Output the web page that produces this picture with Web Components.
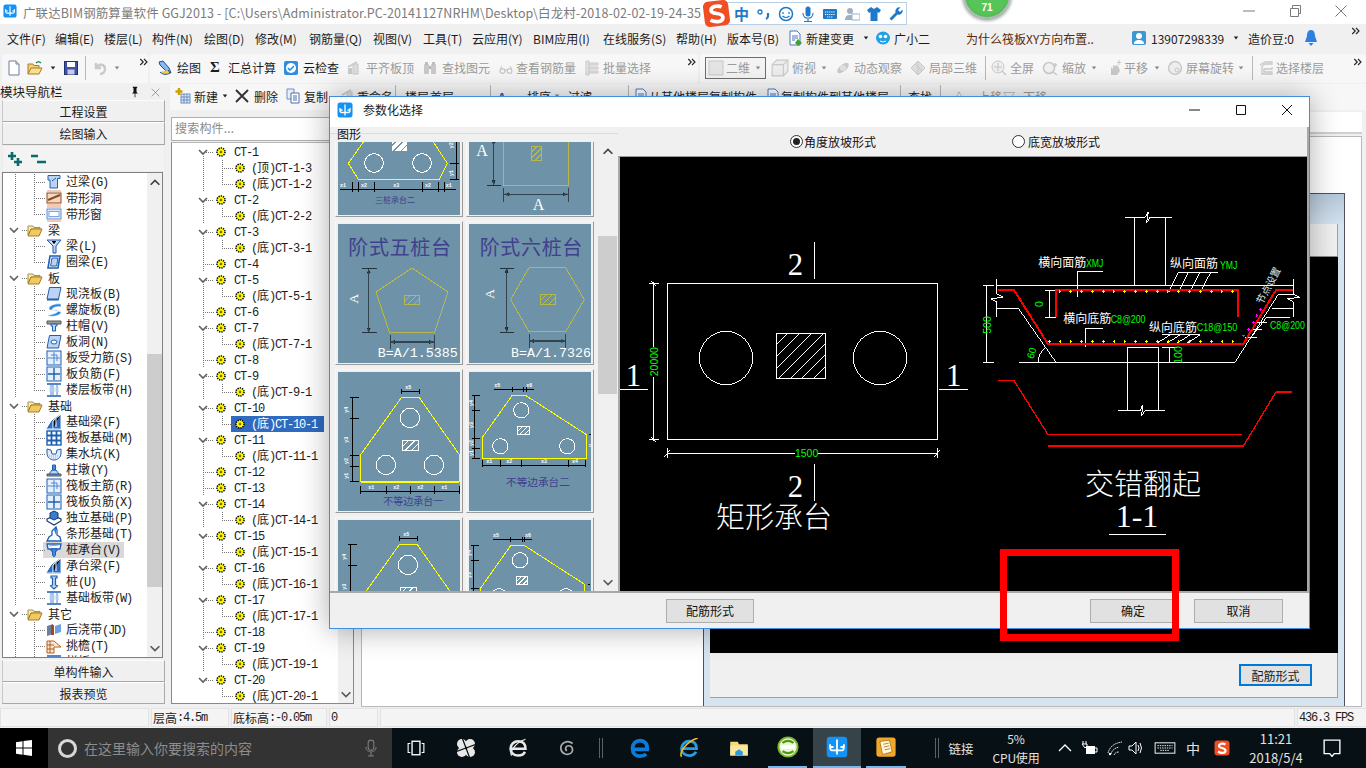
<!DOCTYPE html>
<html lang="zh"><head><meta charset="utf-8"><title>GGJ2013</title>
<style>html,body{margin:0;padding:0;overflow:hidden;background:#f0f0f0}</style></head>
<body>
<gg-app>
  <gg-title></gg-title>
  <gg-menu></gg-menu>
  <gg-tools></gg-tools>
  <gg-work></gg-work>
  <gg-status></gg-status>
  <gg-taskbar></gg-taskbar>
  <gg-ime slot="over"></gg-ime>
  <gg-badge slot="over"></gg-badge>
  <gg-dialog slot="over"></gg-dialog>
  <gg-mark slot="over"></gg-mark>
</gg-app>
<script>
const $d=(name,css,render)=>customElements.define(name,class extends HTMLElement{connectedCallback(){if(this.shadowRoot)return;const r=this.attachShadow({mode:'open'});r.innerHTML=`<style>${css}</style>`+render(this);}});
const sim=s=>s.replace(/[\x20-\x7e]+/g,m=>`<span class="m">${m}</span>`);
const SIM='.m{font-family:"Liberation Mono",monospace;letter-spacing:-1.2px}';
const FONT='"Noto Sans CJK SC","Noto Sans",sans-serif';
const B='#1c5fb5',L='#bcd4f2',G='#9a9a9a',P='#c9c9c9';
const I={
gear:`<circle cx="8" cy="8" r="4.6" fill="#ff0" stroke="#000" stroke-width="1.8" stroke-dasharray="1.5 1.1"/><circle cx="8" cy="8" r="1.6" fill="#b08a00"/><circle cx="8" cy="8" r=".7" fill="#000"/>`,
folder:`<path d="M1 4h5l1 1.5h6V7H4L1 13z" fill="#fbeec0" stroke="#b08b3a"/><path d="M4 7h11l-3 7H1z" fill="#f3c95e" stroke="#a67c2a"/>`,
guoliang:`<path d="M2 1.5h12v3h-2.5V14H4V6H2z" fill="${L}" stroke="${B}"/><path d="M6 7l4-3" stroke="${B}"/>`,
dongH:`<rect x="1" y="3" width="14" height="10" fill="#f3d9c4" stroke="#8b4a1d"/><path d="M2 10L14 5" stroke="#8b4a1d" stroke-width="2"/><path d="M1 1h14M1 15h14" stroke="#f4c8b4" stroke-width="2"/>`,
dongW:`<rect x="1" y="3" width="14" height="10" fill="#dde9fb" stroke="#5f8fd6"/><rect x="3" y="5.5" width="10" height="5" fill="#fff" stroke="#7fa6e0"/><path d="M1 1h14M1 15h14" stroke="#f4c8b4" stroke-width="2"/>`,
liang:`<path d="M1 2h14l-5 6v7H7V8z" fill="${L}" stroke="${B}"/><path d="M5 3l3 4 3-4" stroke="#fff"/>`,
quan:`<path d="M4 2h10l-2 12H2z" fill="#fff" stroke="${B}" stroke-width="1.6"/><path d="M6 4h6l-1.4 8H4.6z" fill="${L}" stroke="${B}"/>`,
ban:`<path d="M3.5 1.5H15L12.5 13H1z" fill="${L}" stroke="${B}"/><path d="M1 13v1.5h11.5l.5-1.5" fill="${B}"/>`,
luo:`<path d="M15 2C9 1 2 4 3 7s9 0 9 2-7 4-11 4c3 2 11 2 14-2 1-3-9-1-9-3s4-4 9-3z" fill="#2f86e0" stroke="#fff" stroke-width=".6"/>`,
zhumao:`<path d="M1 3h14v3H1z" fill="#9b9b9b" stroke="#555"/><path d="M5 6h6v2H9.5v5h-3V8H5z" fill="${L}" stroke="${B}"/>`,
bandong:`<path d="M3.5 1.5H15L12.5 14H1z" fill="${L}" stroke="${B}"/><ellipse cx="8" cy="8" rx="3" ry="2" fill="#fff" stroke="${B}"/>`,
shouli:`<rect x="1" y="1" width="14" height="14" fill="#e6f0fc" stroke="${B}"/><path d="M8 2v12M2 8h12M5 5h6v6" stroke="#4a87d8" fill="none"/>`,
fujin:`<rect x="1" y="1" width="14" height="14" fill="#e6f0fc" stroke="${B}"/><path d="M8 2v12M2 8h12" stroke="${B}" stroke-width="1.4"/>`,
bandai:`<path d="M1 2h14M1 14h14" stroke="${B}" stroke-width="1.6"/><path d="M5 3v10M11 3v10M7 3v10" stroke="#4a87d8"/><rect x="3" y="5" width="10" height="5" fill="#bcd4f2" opacity=".5"/>`,
jiliang:`<path d="M1 15L6 7l8-6v14z" fill="#2a70c8" stroke="${B}"/><path d="M1 15h13M7 15V7l7-6" stroke="#fff"/><path d="M10 5v8" stroke="#fff"/>`,
fab:`<rect x="1" y="1" width="14" height="14" fill="#fff" stroke="${B}" stroke-width="1.4"/><path d="M5.5 1v14M10.5 1v14M1 5.5h14M1 10.5h14" stroke="${B}" stroke-width="1.8"/>`,
jikeng:`<path d="M1 3l4 1 1 4h4l1-4 4-1v4c0 5-4 7-7 7S1 12 1 7z" fill="#dfeafa" stroke="${B}"/><path d="M3 10h10M5 12h6" stroke="#8bb0e6" stroke-dasharray="1 1"/>`,
zhudun:`<path d="M1 12h14v2H1z" fill="#9b9b9b" stroke="#555"/><path d="M3 12l3-4h4l3 4z" fill="${L}" stroke="${B}"/><path d="M6.5 8V3h3v5z" fill="#4a87d8" stroke="${B}"/>`,
duli:`<path d="M1 9l7-3 7 3v2l-7 4-7-4z" fill="#fff" stroke="#123a75" stroke-width="1.2"/><path d="M4 8V3l4-2 4 2v5l-4 2z" fill="#3a7dd0" stroke="#123a75"/>`,
tiao:`<path d="M1 15l2-4 3-2V5l4-4 1 3v5l3 2 1 4z" fill="#fff" stroke="${B}" stroke-width="1.3"/><path d="M8 4l2-2v7" fill="#3a7dd0"/>`,
chengtai:`<path d="M1 2h14l-1 5H2z" fill="#fff" stroke="${B}" stroke-width="1.3"/><path d="M5 7h6v2H9.5v4L8 15l-1.5-2V9H5z" fill="#4a87d8" stroke="${B}"/><path d="M3 4l10-1" stroke="#7fa6e0"/>`,
zhuang:`<path d="M5 2h6v2H9.5v7l2 1-3.5 3-3.5-3 2-1V4H5z" fill="${L}" stroke="${B}" stroke-width="1.2"/>`,
hou:`<path d="M1 4l6-2v10l-6 2z" fill="#6b7f9e"/><path d="M5 3h3v10H5z" fill="#a9461a"/><path d="M9 4l6-2v8l-6 2z" fill="#6ba2e6"/>`,
tiaoyan:`<path d="M1 3h7l7 6H8v6H1z" fill="#fbe6d0" stroke="#b45f1f"/><path d="M1 7h7M1 11h7M4 3v12" stroke="#b45f1f"/>`,
newdoc:`<path d="M3 1h7l3 3v11H3z" fill="#fff" stroke="#6f7f9a"/><path d="M10 1v3h3" fill="#dfe7f5" stroke="#6f7f9a"/>`,
open:`<path d="M1 14V4h5l1 1.5h5V8" fill="#f5d06e" stroke="#a67c2a"/><path d="M1 14l3-6h11l-3 6z" fill="#f9df90" stroke="#a67c2a"/><path d="M9 3c2-2 4-1 5 0" stroke="#2e8b57" fill="none" stroke-width="1.4"/>`,
save:`<rect x="1.5" y="1.5" width="13" height="13" fill="#3e52a8" stroke="#23316f"/><rect x="4" y="2" width="8" height="5" fill="#fff"/><rect x="4.5" y="9.5" width="7" height="5" fill="#c4cbe5"/>`,
undo:`<path d="M4 3v5h5M4 8c3-5 9-4 9 1 0 3-2 5-5 5" fill="none" stroke="${P}" stroke-width="2.4"/>`,
huitu:`<path d="M2 2l4-1 6 7 2 5-5-2-6-6z" fill="#89b8ee" stroke="#1f4f99"/><path d="M3 12c3 3 7 3 10 1l-2-3" fill="#f2c94c" stroke="#1f4f99"/>`,
cloud:`<rect x="1" y="1" width="14" height="14" rx="2" fill="#2e8de0"/><circle cx="8" cy="8" r="5" fill="#fff"/><path d="M5 8l2 2 4-4" fill="none" stroke="#2e8de0" stroke-width="1.6"/>`,
gb:`<rect x="2" y="8" width="4" height="6" fill="${P}"/><rect x="7" y="4" width="5" height="10" fill="#dcdcdc" stroke="${P}"/><path d="M2 7l9-5" stroke="${P}" stroke-width="1.6"/>`,
binoc:`<rect x="2" y="4" width="5" height="10" rx="1" fill="${P}"/><rect x="9" y="4" width="5" height="10" rx="1" fill="${P}"/><path d="M3 2h3v3H3zM10 2h3v3h-3z" fill="#bdbdbd"/><rect x="7" y="6" width="2" height="3" fill="#bbb"/>`,
glass:`<circle cx="4.5" cy="11" r="2.4" fill="none" stroke="${P}" stroke-width="1.3"/><circle cx="11.5" cy="11" r="2.4" fill="none" stroke="${P}" stroke-width="1.3"/><path d="M7 10h2M2 9l2-3M14 9l-2-3" stroke="${P}"/>`,
batch:`<path d="M2 1h3v14H2zM5 3h9v2H5zM5 7h9v2H5zM5 11h9v2H5z" fill="#e4e4e4" stroke="${P}"/>`,
cube:`<path d="M1 5l4-4h10v10l-4 4H1z" fill="#ededed" stroke="${P}"/><path d="M1 5h10v10M11 5l4-4" fill="none" stroke="${P}"/>`,
orbit:`<ellipse cx="8" cy="8" rx="7" ry="3.4" transform="rotate(-40 8 8)" fill="${P}"/><ellipse cx="8" cy="8" rx="3" ry="3" fill="#e0e0e0"/>`,
local:`<path d="M8 1l7 7-7 7-7-7z" fill="#dedede" stroke="${P}"/><path d="M5 4l7 7M8 1v14" stroke="${P}"/>`,
full:`<circle cx="7" cy="7" r="6" fill="#efefef" stroke="${P}"/><path d="M7 3v8M3 7h8M11 11l4 4" stroke="${P}" stroke-width="1.2"/>`,
zoom:`<circle cx="7" cy="8" r="5.5" fill="#f1f1f1" stroke="${P}" stroke-width="1.6"/><path d="M11 12l4 3M13 3v4M11 5h4" stroke="${P}" stroke-width="1.4"/>`,
pan:`<path d="M4 15V7l2 2V5l2 1 1-1 2 1 1 2 1 3-3 4z" fill="${P}"/><path d="M12 0v5M10 2.500h4" stroke="${P}"/>`,
rot:`<circle cx="8" cy="8" r="6.500" fill="#eee" stroke="${P}" stroke-width="1.4"/><circle cx="10" cy="10" r="2" fill="none" stroke="${P}"/><path d="M2 4l3 1-1-3" fill="${P}"/>`,
floor:`<path d="M2 5l5-3h7v2H7L4 6v8h10v-2H6V9h8V7" fill="none" stroke="${P}" stroke-width="1.3"/>`,
newc:`<rect x="6" y="6" width="9" height="9" fill="#dfe9f8" stroke="#6b8fc4"/><path d="M6 9h9M6 12h9M9 6v9M12 6v9" stroke="#6b8fc4"/><path d="M4 0v7M0.500 3.500h7" stroke="#c9a100" stroke-width="2.400"/>`,
del:`<path d="M2 2l12 12M14 2L2 14" stroke="#333" stroke-width="1.9"/>`,
copy:`<path d="M2 1h7v10H2z" fill="#e6eefb" stroke="#6b8fc4"/><path d="M6 5h8v10H6z" fill="#fff" stroke="#4b6fa8"/><path d="M8 8h4M8 10h4M8 12h4" stroke="#4b6fa8"/>`,
doc:`<path d="M3 1h7l3 3v11H3z" fill="#fff" stroke="#4b78c4"/><path d="M5 6h6M5 8h6M5 10h3" stroke="#4b78c4"/><path d="M11 9l4 4-4 3-3-3z" fill="#42a02c"/>`,
xiao:`<ellipse cx="8" cy="8" rx="7" ry="6.500" fill="#21a0e6"/><circle cx="5.500" cy="6.500" r="1.800" fill="#fff"/><circle cx="10.500" cy="6.500" r="1.800" fill="#fff"/><path d="M5 11q3 2 6 0" stroke="#fff" fill="none"/>`,
user:`<rect x="1" y="1" width="14" height="14" rx="2" fill="#3d97d3"/><circle cx="8" cy="6" r="3" fill="#fff"/><path d="M3 14c0-3 2-4 5-4s5 1 5 4z" fill="#fff"/>`,
bell:`<path d="M8 0c3 0 4 3 4 6l2 6H2l2-6c0-3 1-6 4-6z" fill="#2d7fe0"/><path d="M5.500 13h5l-2.500 3z" fill="#2d7fe0"/>`,
ggj:`<rect x=".5" y=".5" width="15" height="15" rx="2.500" fill="#1492f5"/><path d="M8 2.500v11M3 6v2.500a2 2 0 0 0 2 2h6a2 2 0 0 0 2-2V6M3 8h2.500M13 8h-2.500" stroke="#fff" stroke-width="1.300" fill="none"/>`,
plus:`<path d="M5 1v8M1 5h8M11 7v8M7 11h8" stroke="#0d6a6a" stroke-width="2.600"/>`,
minus:`<path d="M1 5h7M7 11h9" stroke="#0d6a6a" stroke-width="2.600"/>`,
pin:`<path d="M5 1h6v1l-1 1v5l2 2H4l2-2V3L5 2zM7.500 10h1v5h-1z" fill="#111"/>`,
sx:`<rect x=".5" y=".5" width="15" height="15" rx="3" fill="#f04e23"/><path d="M11.500 4.500C9 3 5 3.500 5 6s6.500 1.500 6.500 4.500S7 13.500 4 11.500" stroke="#fff" stroke-width="2.200" fill="none"/>`,
win:`<path d="M0 2.200l6.500-1v6.400H0zM7.500 1L16 0v7.500H7.500zM0 8.500h6.500v6.300L0 13.800zM7.500 8.500H16V16l-8.500-1.200z" fill="#fff"/>`,
mic:`<rect x="5.500" y="1" width="5" height="9" rx="2.500" fill="none" stroke="#7a7a7a"/><path d="M3.500 7c0 6 9 6 9 0M8 12v3M5.500 15h5" stroke="#7a7a7a" fill="none"/>`,
tv:`<rect x="4.500" y="2" width="7" height="12" fill="none" stroke="#fff" stroke-width="1.200"/><path d="M3 4H1v8h2M13 4h2v8h-2" fill="none" stroke="#fff"/>`,
fan:`<circle cx="4.700" cy="4.700" r="3.900" fill="#e8e8e8"/><circle cx="11.300" cy="4.700" r="3.900" fill="#e8e8e8"/><circle cx="4.700" cy="11.300" r="3.900" fill="#e8e8e8"/><circle cx="11.300" cy="11.300" r="3.900" fill="#e8e8e8"/><path d="M8 8L5 0M8 8L16 5M8 8L11 16M8 8L0 11" stroke="#071014" stroke-width="1"/>`,
ie:`<path d="M2 8.500h12C14 4 11 2.500 8 2.500S2 5 2 8.500s3 5.500 6 5.500 5-1.500 5.500-3" fill="none" stroke="#e8e8e8" stroke-width="2"/><path d="M3 14C1 12 5 4 14 1" stroke="#e8e8e8" fill="none"/>`,
spiral:`<path d="M13 4C8 0 2 4 2.500 8.500 3 13 8 15 11.500 12.500 14 10.500 13 6 9.500 6 6.500 6 6 9.500 8 10.500" fill="none" stroke="#aaa" stroke-width="1.500"/>`,
edge:`<path d="M2.500 9h11.300C14 4.500 11.500 2 8 2 4.500 2 2 4.800 2 8.500c0 3.700 2.700 6 6 6 2 0 3.800-.6 5-1.600" fill="none" stroke="#0e7ad8" stroke-width="3"/>`,
ie2:`<path d="M2 8.500h12C14 4 11 2.500 8 2.500S2 5 2 8.500s3 5.500 6 5.500 5-1.500 5.500-3" fill="none" stroke="#2a9be0" stroke-width="2.200"/><path d="M2 15C0 11 6 3 15 0" stroke="#f2b91a" stroke-width="1.300" fill="none"/>`,
fold2:`<path d="M1 3h6l1 2h7v9H1z" fill="#f7d978"/><rect x="1" y="6" width="14" height="8" fill="#fbe6a0"/><path d="M5 14v-3l3-2 3 2v3z" fill="#2a9be0"/>`,
green:`<circle cx="8" cy="8" r="7" fill="#e8f5d0" stroke="#7ab62a" stroke-width="1.400"/><path d="M3 8h10" stroke="#fff" stroke-width="2.400"/><path d="M4 5q4-3 8 0M4 11q4 3 8 0" stroke="#4d9a18" fill="none" stroke-width="1.600"/>`,
notes:`<rect x="1" y="1" width="14" height="14" rx="2" fill="#f0a92a"/><path d="M3.500 4l7-1 2 8.500-7 2z" fill="#fff6dc" stroke="#a87415" stroke-width=".6"/><path d="M6 6l4-.8M6.400 8l4-.8M7 10l4-.8" stroke="#a87415" stroke-width=".6"/>`,
plug:`<rect x="4" y="6" width="9" height="8" fill="#fff"/><path d="M13 8h2v4h-2M1 1v3M4 1v3M0 4h5v2l-2 2z" stroke="#fff" fill="none"/>`,
wifi:`<path d="M1 13C3 6 8 3 15 2M4 14c1-4 4-6 8-7M7 15c1-2 2-3 5-3" stroke="#fff" stroke-width=".9" fill="none" stroke-dasharray="1.500 .7"/><circle cx="3" cy="14" r="1.200" fill="#fff"/>`,
vol:`<path d="M1 6h3l4-4v12l-4-4H1z" fill="none" stroke="#fff"/><path d="M10 5q2 3 0 6M12 3q3 5 0 10" stroke="#fff" fill="none"/>`,
kbd:`<rect x=".5" y="3" width="21" height="11" fill="none" stroke="#fff"/><path d="M3 6h16M3 8.500h16M6 11h10" stroke="#fff" stroke-dasharray="1.500 1"/>`,
note:`<path d="M1 1h14v12H10l-2 2.500L6 13H1z" fill="none" stroke="#fff" stroke-width="1.200"/>`,
smile:`<circle cx="8" cy="8" r="6.500" fill="#fff" stroke="#1e79c9" stroke-width="1.500"/><path d="M5 6v2M11 6v2M4.500 10q3.500 3 7 0" stroke="#1e79c9" stroke-width="1.200" fill="none"/>`,
imic:`<rect x="5.500" y="0.500" width="5" height="10" rx="2.500" fill="#1e79c9"/><path d="M3 7c0 7 10 7 10 0M8 13v2.500M4 15.500h8" stroke="#1e79c9" fill="none" stroke-width="1.200"/>`,
ikbd:`<rect x="1" y="3" width="14" height="10" rx="1" fill="#1e79c9"/><path d="M3 6h10M3 8.500h10M5 11h6" stroke="#fff" stroke-dasharray="1.200 .9"/>`,
iuser:`<circle cx="6" cy="5" r="3" fill="#9db0c4"/><path d="M1 14c0-4 2-5 5-5s5 1 5 5z" fill="#9db0c4"/><rect x="8" y="8" width="8" height="6" fill="#fff" stroke="#9db0c4"/>`,
ishirt:`<path d="M5 1L1 4l2 3 1.500-1v9h7V6L13 7l2-3-4-3-3 2z" fill="#1e79c9"/>`,
iwrench:`<path d="M14.500 3.500l-2.500 2.500-2-2 2.500-2.500a4 4 0 0 0-5 5l-6 6 2 2 6-6a4 4 0 0 0 5-5z" fill="#1e79c9"/>`,
icomma:`<circle cx="4" cy="6" r="2" fill="none" stroke="#1e79c9" stroke-width="1.300"/><path d="M12 7v3q0 2-2 3" stroke="#1e79c9" stroke-width="2.200" fill="none"/>`,
up:`<path d="M3 10l5-5 5 5" fill="none" stroke="#444" stroke-width="2"/>`,
down:`<path d="M3 6l5 5 5-5" fill="none" stroke="#5a5a5a" stroke-width="2"/>`,
caret:`<path d="M5 6h6l-3 4z" fill="#222"/>`,
caretg:`<path d="M5 6h6l-3 4z" fill="#888"/>`,
more:`<path d="M3 4l4 4-4 4M8 4l4 4-4 4" fill="none" stroke="#222" stroke-width="1.500"/>`,
winmin:`<path d="M2 8h12" stroke="#7a7a7a"/>`,
winres:`<path d="M3.500 5.500h8v8h-8zM5.500 5V2.500h8v8H12" fill="none" stroke="#7a7a7a"/>`,
winx:`<path d="M2.500 2.500l11 11M13.500 2.500l-11 11" stroke="#7a7a7a"/>`,
dmin:`<path d="M2 8h11" stroke="#111"/>`,
dmax:`<path d="M3.500 3.500h9v9h-9z" fill="none" stroke="#111"/>`,
dx:`<path d="M3 3l10 10M13 3L3 13" stroke="#111"/>`,
chev:`<path d="M3 6l5 4 5-4" fill="none" stroke="#5f5f5f" stroke-width="1.800"/>`,
sel:`<rect x="1" y="1" width="14" height="14" fill="#e4e4e4" stroke="#c8c8c8"/>`
};
$d('ui-icon',':host{display:inline-flex;flex:none;line-height:0}svg{display:block}',h=>{const s=h.getAttribute('s')||16,w=h.getAttribute('w')||s;const vb=h.getAttribute('n')==='kbd'?'0 0 22 17':'0 0 16 16';return `<svg xmlns="http://www.w3.org/2000/svg" width="${w}" height="${s}" viewBox="${vb}">${I[h.getAttribute('n')]||''}</svg>`});
const ic=(n,s=16,w)=>`<ui-icon n="${n}" s="${s}"${w?` w="${w}"`:''}></ui-icon>`;
const more=(t=-12)=>`<span style="display:inline-flex;margin-top:${t}px">${ic('more',12)}</span>`;

/* shell */
$d('gg-app',`:host{display:flex;flex-direction:column;position:relative;width:1366px;height:768px;overflow:hidden;font:12px ${FONT};color:#1c1c1c;background:#f0f0f0}`,()=>`<slot></slot><slot name="over"></slot>`);

const cells=(start,end,list)=>list.map((c,i)=>{const nx=i+1<list.length?list[i+1][0]:end;return `<span class="c" style="flex:0 0 ${nx-c[0]}px;${c[2]||''}">${c[1]}</span>`}).join('');

$d('gg-title',`:host{display:flex;align-items:center;height:24px;background:#fff;flex:none;color:#7b7b7b}
.i{margin:0 6px 0 3px}.t{font-size:12.500px;white-space:nowrap;flex:1;overflow:hidden;width:0;letter-spacing:.1px}.w{display:flex;margin-right:17px;gap:30px;margin-top:-3px}`,()=>
`<span class="i">${ic('ggj',14)}</span><span class="t">广联达BIM钢筋算量软件 GGJ2013 - [C:\\Users\\Administrator.PC-20141127NRHM\\Desktop\\白龙村-2018-02-02-19-24-35</span><span class="w">${ic('winmin')}${ic('winres')}${ic('winx')}</span>`);

$d('gg-menu',`:host{display:flex;align-items:center;height:29px;flex:none;background:#f0f0f0;white-space:nowrap;padding:0 0 1px 7px;box-sizing:border-box}
.c{display:inline-flex;align-items:center;overflow:visible}`,()=>cells(7,1366,[
[7,'文件(F)'],[55,'编辑(E)'],[104,'楼层(L)'],[152,'构件(N)'],[204,'绘图(D)'],[255,'修改(M)'],[309,'钢筋量(Q)'],[373,'视图(V)'],[423,'工具(T)'],[472,'云应用(Y)'],[533,'BIM应用(I)'],[603,'在线服务(S)'],[676,'帮助(H)'],[727,'版本号(B)'],
[787,ic('doc')],[806,'新建变更'],[860,ic('caret',12)],[875,ic('xiao')],[894,'广小二'],[932,''],
[966,'<span style="color:#5a2a0a">为什么筏板XY方向布置..</span>'],[1131,ic('user')],[1151,'13907298339'],[1230,ic('caret',12)],[1248,'造价豆:0'],[1303,ic('bell')],[1350,more(-14)]]));

const T=(c,t)=>`<span style="color:${c}">${t}</span>`;
const gr=t=>T('#9b9b9b',t);
$d('gg-tools',`:host{display:flex;height:31px;flex:none;background:#f0f0f0;padding:1px 0 1px 2px;box-sizing:border-box;gap:2px;white-space:nowrap}
.s{display:flex;align-items:center;background:#f7f7f7;border-radius:3px;padding-bottom:2px;box-sizing:border-box}
.c{display:inline-flex;align-items:center}.bx{display:inline-flex;align-items:center;width:61px;height:22px;border:1px solid #6e6e6e;box-sizing:border-box;padding-left:2px;gap:2px;color:#9b9b9b;background:#f3f3f3}
.sp{width:1px;height:24px;background:#b8b8b8}`,()=>{
const seg=(a,b,l)=>`<div class="s" style="width:${b-a}px">${cells(a,b,l)}</div>`;
return seg(2,148,[[2,''],[6,ic('newdoc')],[27,ic('open')],[47,ic('caret',12)],[63,ic('save')],[85,'<span class="sp"></span>'],[92,ic('undo')],[111,ic('caretg',12)],[138,more()]])
+seg(150,698,[[150,''],[157,ic('huitu')],[177,'绘图'],[210,'<b style="font:bold 15px Liberation Serif">Σ</b>'],[228,'汇总计算'],[283,ic('cloud')],[303,'云检查'],[346,ic('gb')],[366,gr('平齐板顶')],[422,ic('binoc')],[442,gr('查找图元')],[498,ic('glass')],[516,gr('查看钢筋量')],[584,ic('batch')],[603,gr('批量选择')],[686,more()]])
+seg(700,1366,[[700,''],[705,`<span class="bx">${ic('sel')}二维${ic('caretg',12)}</span>`],[771,ic('cube',18)],[792,gr('俯视')],[818,ic('caretg',12)],[835,ic('orbit')],[854,gr('动态观察')],[910,ic('local')],[929,gr('局部三维')],[985,'<span class="sp"></span>'],[991,ic('full')],[1010,gr('全屏')],[1042,ic('zoom')],[1062,gr('缩放')],[1088,ic('caretg',12)],[1107,ic('pan')],[1124,gr('平移')],[1151,ic('caretg',12)],[1167,ic('rot')],[1186,gr('屏幕旋转')],[1235,ic('caretg',12)],[1252,'<span class="sp"></span>'],[1258,ic('floor')],[1276,gr('选择楼层')],[1352,more()]]);
});

/* work */
$d('gg-work',`:host{display:flex;height:623px;flex:none}.r{flex:1;display:flex;flex-direction:column;min-width:0}.b{flex:1;display:flex;min-height:0}`,()=>
`<nav-panel></nav-panel><div class="r"><tool-two></tool-two><div class="b"><comp-panel></comp-panel><main-panel></main-panel></div></div>`);

$d('tool-two',`:host{display:flex;align-items:center;height:26px;flex:none;margin-left:4px;background:#f7f7f7;white-space:nowrap;color:#222;padding-bottom:2px;box-sizing:border-box}.c{display:inline-flex;align-items:center}.sp{width:1px;height:22px;background:#b8b8b8}`,()=>cells(170,1366,[
[170,''],[175,ic('newc')],[194,'新建'],[219,ic('caret',12)],[234,ic('del')],[254,'删除'],[285,ic('copy')],[304,'复制'],[340,ic('gb')],[357,'重命名'],[395,'<span class="sp"></span>'],[405,'楼层'],[430,'首层'],[490,'<span class="sp"></span>'],[498,'<b style="color:#3060c0">A</b>'],[527,'排序'],[548,ic('caretg',12)],[565,'过滤'],[625,'<span class="sp"></span>'],[630,ic('doc')],[646,'从其他楼层复制构件'],[762,ic('doc')],[778,'复制构件到其他楼层'],[897,'<span class="sp"></span>'],[905,'查找'],[937,'<span class="sp"></span>'],[950,gr('△')],[975,gr('上移')],[1000,gr('▽')],[1020,gr('下移')],[1060,'']]));

$d('side-btn',`:host{display:flex;align-items:center;justify-content:center;box-sizing:border-box;background:#f0f0f0;border:1px solid #a8a8a8;border-top-color:#fdfdfd;border-left-color:#c8c8c8;height:var(--h,22px);letter-spacing:0;flex:none;margin:0 0 0 2px}`,h=>`<slot></slot>`);

const NAV=[
['c','guoliang','过梁(G)'],['c','dongH','带形洞'],['l','dongW','带形窗'],
['f','梁'],['c','liang','梁(L)'],['l','quan','圈梁(E)'],
['f','板'],['c','ban','现浇板(B)'],['c','luo','螺旋板(B)'],['c','zhumao','柱帽(V)'],['c','bandong','板洞(N)'],['c','shouli','板受力筋(S)'],['c','fujin','板负筋(F)'],['l','bandai','楼层板带(H)'],
['f','基础'],['c','jiliang','基础梁(F)'],['c','fab','筏板基础(M)'],['c','jikeng','集水坑(K)'],['c','zhudun','柱墩(Y)'],['c','shouli','筏板主筋(R)'],['c','fujin','筏板负筋(X)'],['c','duli','独立基础(P)'],['c','tiao','条形基础(T)'],['s','chengtai','桩承台(V)'],['c','jiliang','承台梁(F)'],['c','zhuang','桩(U)'],['l','bandai','基础板带(W)'],
['f','其它'],['c','hou','后浇带(JD)'],['c','tiaoyan','挑檐(T)'],['c','bandai','栏板(K)']];
const dots=(d)=>`<path d="${d}" stroke="#777" stroke-dasharray="1 1" fill="none" shape-rendering="crispEdges"/>`;
$d('nav-panel',`:host{display:flex;flex-direction:column;width:166px;flex:none;box-sizing:border-box;padding:0 1px 3px 0}
.h{display:flex;align-items:center;height:16px;flex:none;white-space:nowrap;overflow:hidden;background:#f0f0f0;letter-spacing:0;font-size:12.500px;gap:0}
.h .tx{flex:1;margin-top:-1px}.h ui-icon{margin-right:4px}
.bar{height:27px;flex:none;margin-left:2px;display:flex;align-items:center;padding-left:4px;gap:7px;background:#f3f3f3;box-sizing:border-box;border:1px solid #ececec}
.box{flex:1;min-height:0;margin:0 2px 2px 2px;border:1px solid #808080;display:flex;background:#fff;overflow:hidden}
.list{flex:1;overflow:hidden;padding-top:1px}.row{display:flex;align-items:center;height:16px;line-height:16px;white-space:nowrap}
.row svg.g{flex:none}.t{margin-left:4px}.f .t{margin-left:5px}.s .t{background:none}
.row.s{background:linear-gradient(#d9d9d9,#d9d9d9) no-repeat 40px 0/81px 16px}
${SIM}`,()=>{
const rows=NAV.map(r=>{
 if(r[0]==='f')return `<div class="row f"><svg class="g" width="24" height="16">${dots('M19 8h5')}<path d="M7 6l4 4 4-4" fill="none" stroke="#5f5f5f" stroke-width="1.600"/></svg>${ic('folder')}<span class="t">${r[1]}</span></div>`;
 const last=r[0]==='l';
 return `<div class="row ${r[0]}"><svg class="g" width="43" height="16">${dots('M12 0v16')}${dots((last?'M31 0v8':'M31 0v16')+'M31 8h12')}</svg>${ic(r[1])}<span class="t">${sim(r[2])}</span></div>`;
}).join('');
return `<div class="h"><span class="tx">模块导航栏</span>${ic('pin',12)}<span style="width:5px"></span>${ic('winx',11)}<span style="width:0"></span></div>
<side-btn style="--h:22px">工程设置</side-btn><side-btn style="--h:23px">绘图输入</side-btn>
<div class="bar">${ic('plus')}${ic('minus')}</div>
<div class="box"><div class="list">${rows}</div><scroll-bar top="162" len="233" w="15"></scroll-bar></div>
<side-btn style="--h:22px">单构件输入</side-btn><side-btn style="--h:22px">报表预览</side-btn>`;
});

$d('scroll-bar',`:host{display:flex;flex-direction:column;flex:none;background:#f0f0f0;box-sizing:border-box}.a{height:19px;display:flex;justify-content:center;align-items:center;flex:none}.s{flex:1}.th{background:#cdcdcd;flex:none}`,h=>{
const top=+h.getAttribute('top')||0,len=+h.getAttribute('len')||0,w=h.getAttribute('w')||16;
return `<style>:host{width:${w}px}</style><div class="a">${ic('up',14)}</div><div style="height:${top}px;flex:none"></div><div class="th" style="height:${len}px"></div><div class="s"></div><div class="a">${ic('down',14)}</div>`;
});

const CT=[[1,['顶3','底2']],[2,['底2']],[3,['底1']],[4],[5,['底1']],[6],[7,['底1']],[8],[9,['底1']],[10,['底1']],[11,['底1']],[12],[13],[14,['底1']],[15,['底1']],[16,['底1']],[17,['底1']],[18],[19,['底1']],[20,['底1']]];
$d('comp-panel',`:host{display:flex;flex-direction:column;width:183px;flex:none;margin-left:5px;box-sizing:border-box;padding-bottom:3px}
.sr{height:24px;flex:none;margin:7px 0 1px 0;box-sizing:border-box;border:1px solid #adadad;background:#fff;color:#8a8a8a;padding:0 0 3px 3px;display:flex;align-items:center;letter-spacing:.2px}
.box{flex:1;min-height:0;border:1px solid #8a8a8a;border-top-color:#b5b5b5;display:flex;background:#fff;overflow:hidden}
.list{flex:1;overflow:hidden;padding-top:1px}.row{display:flex;align-items:center;height:16px;line-height:16px;white-space:nowrap}
svg.g{flex:none}.t{margin-left:4px}.top .t{margin-left:6px}
.sel{background:linear-gradient(#2f6bc1,#2f6bc1) no-repeat 59px 0/93px 16px;color:#fff}
${SIM}`,()=>{
let out='';
CT.forEach(([n,ch],i)=>{
 const next=i<CT.length-1;
 if(ch){out+=`<div class="row top"><svg class="g" width="42" height="16">${dots('M32 8h10')}${next?dots('M31 12v4'):''}<path d="M26 6l4 4 4-4" transform="translate(1 0)" fill="none" stroke="#5f5f5f" stroke-width="1.600"/></svg>${ic('gear',14)}<span class="t">${sim('CT-'+n)}</span></div>`;
  ch.forEach((c,j)=>{const last=j===ch.length-1,idx=c[1];out+=`<div class="row ch${n===10?' sel':''}"><svg class="g" width="61" height="16">${next?dots('M31 0v16'):''}${dots((last?'M50 0v8':'M50 0v16')+'M50 8h11')}</svg>${ic('gear',14)}<span class="t">${sim('('+c[0]+')CT-'+n+'-'+idx)}</span></div>`;});
 }else{out+=`<div class="row top"><svg class="g" width="42" height="16">${dots('M31 0v'+(next?16:8)+'M31 8h11')}</svg>${ic('gear',14)}<span class="t">${sim('CT-'+n)}</span></div>`;}
});
return `<div class="sr">搜索构件...</div><div class="box"><div class="list">${out}</div><scroll-bar w="15"></scroll-bar></div>`;
});

$d('main-panel',`:host{flex:1;display:flex;flex-direction:column;min-width:0;margin-left:7px;background:#f0f0f0}
.tab{height:20px;margin-top:2px;flex:none;background:#fff;border-bottom:2px solid #d0d0d0;margin-right:4px}
.p{flex:1;min-height:0;display:flex;margin-top:2px;border:1px solid #b8b8b8;background:#fff;margin-right:4px;box-sizing:border-box}
.l{flex:0 0 341px}.gap{flex:1;display:flex;flex-direction:column;justify-content:flex-end;padding-right:16px}`,()=>
`<div class="tab"></div><div class="p"><div class="l"></div><div class="gap"><inner-win></inner-win></div></div>`);

$d('inner-win',`:host{display:flex;flex-direction:column;height:513px;flex:none;box-sizing:border-box;border:1px solid #50505a;border-bottom:0;background:#d6e4f0;padding:0 6px 8px 6px}
.hd{height:30px;flex:none;margin:0 -6px;background:linear-gradient(#b5c7d8,#d3e2ef)}
.tb{height:33px;flex:none;background:linear-gradient(90deg,#dedede,#f0f0f0);border-right:1px solid #a0a0a0;border-bottom:1px solid #888;box-sizing:border-box}
.bk{flex:1;background:#000;min-height:0}
.ft{height:45px;flex:none;background:#f0f0f0;border-right:1px solid #a0a0a0;border-bottom:1px solid #a0a0a0;box-sizing:border-box;display:flex;align-items:center;justify-content:flex-end;padding-right:25px}
.btn{width:73px;height:22px;border:2px solid #0078d7;background:#e1e1e1;box-sizing:border-box;display:flex;align-items:center;justify-content:center}`,()=>
`<div class="hd"></div><div class="tb"></div><div class="bk"></div><div class="ft"><span class="btn">配筋形式</span></div>`);

$d('gg-status',`:host{display:flex;height:21px;flex:none;background:#f0f0f0;box-sizing:border-box;padding:1px 0;white-space:nowrap}
.s{border:1px solid #e2e2e2;background:#f4f4f4;box-sizing:border-box;display:flex;align-items:center;overflow:hidden;padding-left:1px;margin-right:2px;line-height:16px}${SIM}`,()=>
[[149,''],[78,'层高:4.5m'],[96,'底标高:-0.05m'],[49,'0'],[915,''],[70,'436.3 FPS']].map(([w,t])=>`<div class="s" style="flex:0 0 ${w}px">${sim(t)}</div>`).join(''));

$d('task-cell',`:host{display:flex;align-items:center;justify-content:center;height:40px;flex:none;box-sizing:border-box}`,()=>`<slot></slot>`);
$d('gg-taskbar',`:host{display:flex;height:40px;flex:none;background:#071014;color:#e2e2e2;white-space:nowrap;position:relative;font-size:12px}
task-cell{position:relative}.st{background:#000}.sb{background:#333;justify-content:flex-start;color:#8c8c8c;font-size:14px;padding-left:10px;gap:7px}
.cr{border:3px solid #d8d8d8;border-radius:50%;box-sizing:border-box;flex:none;width:19px;height:19px}
.act{background:#36444a}.u{border-bottom:2px solid #76b9ed}.col{flex-direction:column;line-height:19px}.sep{width:2px;height:20px;border-left:1px solid #566;border-right:1px solid #566}`,()=>{
const list=[[0,ic('win'),'st'],[48,`<span class="cr"></span><span style="flex:none;width:271px">在这里输入你要搜索的内容</span>${ic('mic',18)}`,'sb'],
[392,ic('tv',18)],[440,ic('fan',20)],[492,ic('ie',20)],[544,ic('spiral',18)],[590,'<span class="sep"></span>'],[612,ic('edge',20)],[668,ic('ie2',20)],[710,ic('fold2',20)],
[768,ic('green',22),'u'],[807,''],[813,ic('ggj',22),'act u'],[861,''],[866,ic('notes',22),'u'],[906,''],[926,'<span class="sep"></span>'],[948,'<span style="font-size:12.500px">链接</span>'],[974,''],
[980,'<span>5%</span><span style="letter-spacing:-.2px">CPU使用</span>','col'],[1052,`<svg width="14" height="10" viewBox="0 0 14 10"><path d="M1 8l6-6 6 6" fill="none" stroke="#fff" stroke-width="1.300"/></svg>`],
[1078,ic('plug')],[1102,ic('wifi')],[1128,ic('vol')],[1144,ic('kbd',16,24)],[1186,'<span style="font-size:14px">中</span>'],[1200,ic('sx',16)],
[1244,'<span style="font-size:13px">11:21</span><span style="font-size:13px">2018/5/4</span>','col'],[1308,ic('note',18)],[1356,'']];
return list.map((c,i)=>{const nx=i+1<list.length?list[i+1][0]:1366;return `<task-cell class="${c[2]||''}" style="width:${nx-c[0]}px">${c[1]}</task-cell>`}).join('');
});

/* IME + badge */
$d('gg-ime',`:host{position:absolute;left:703px;top:0;display:flex;align-items:center;height:27px}
.s{flex:none;z-index:1;display:flex;transform:rotate(-7deg)}.bar{display:flex;align-items:center;height:23px;margin-left:-8px;width:185px;box-sizing:border-box;border:1px solid #b9cfe6;background:#fff;padding-left:11px;gap:6px;color:#1e79c9}
b{font:bold 15px ${FONT};color:#1e79c9;line-height:16px;width:16px}`,()=>
`<span class="s">${ic('sx',27)}</span><div class="bar"><b>中</b>${ic('icomma')}${ic('smile')}${ic('imic')}${ic('ikbd')}${ic('iuser')}${ic('ishirt')}${ic('iwrench')}</div>`);
$d('gg-badge',`:host{position:absolute;left:964px;top:-28px;width:46px;height:46px;border-radius:50%;background:radial-gradient(#57c457 60%,#3fa742);border:1px solid #aab;box-shadow:0 1px 3px 2px rgba(90,110,90,.55);display:flex;align-items:flex-end;justify-content:center;color:#fff;font:bold 10px "Liberation Sans",sans-serif;box-sizing:border-box;padding-bottom:4px}`,()=>`<slot></slot>71`);

/* drawing helpers, all in 3x zoom units */
const ln=(a,b,c,d,col='#fff',w=3)=>`<path d="M${a} ${b}L${c} ${d}" stroke="${col}" stroke-width="${w}" fill="none"/>`;
const pl=(d,col='#fff',w=3,f='none')=>`<path d="${d}" stroke="${col}" stroke-width="${w}" fill="${f}"/>`;
const tx=(x,y,s,t,col='#fff',ex='')=>`<text x="${x}" y="${y}" font-size="${s}" fill="${col}" ${ex}>${t}</text>`;
const SERIF='font-family="Liberation Serif,serif"',MONO='font-family="Liberation Mono,monospace"',CJK=`font-family='Noto Sans CJK SC,sans-serif'`;
const rot=(x,y,a)=>`transform="rotate(${a} ${x} ${y})" text-anchor="middle"`;
const hatch=(x,y,w,h,col,sw=3,n=4)=>{let o='';for(let i=1;i<=n;i++){const s=(w+h)*i/(n+1);const x1=x+Math.max(0,s-h),y1=y+Math.min(h,s),x2=x+Math.min(w,s),y2=y+Math.max(0,s-w);o+=ln(x1,y1,x2,y2,col,sw)}return `<rect x="${x}" y="${y}" width="${w}" height="${h}" fill="none" stroke="${col}" stroke-width="${sw}"/>`+o};
const tick=(x,y,col='#000',h=12)=>ln(x,y-h,x,y+h,col);
const bl='#000',pur='#40408c',yl='#ff0',ol='#b8b84a';
const circ=(x,y,r,col='#fff')=>`<circle cx="${x}" cy="${y}" r="${r}" fill="none" stroke="${col}" stroke-width="3"/>`;
const lab=(x,y,t,r=0)=>`<text x="${x}" y="${y}" font-size="15" fill="#fff" font-family="Liberation Mono,monospace" ${r?`transform="rotate(-90 ${x} ${y})"`:''} font-weight="bold">${t}</text>`;
const t5=()=>pl('M214 97H268L388 268V349H92V268Z',yl,3)+ln(92,349,388,349,yl,5)+circ(240,158,29)+circ(168,299,29)+circ(312,299,29)+hatch(217,226,47,28,'#fff',3,3)
+ln(92,379,388,379,bl)+[92,169,241,313,388].map(x=>tick(x,373,bl,12)).join('')+lab(115,370,'x1')+lab(190,370,'x2')+lab(262,370,'x2')+lab(334,370,'x1')
+ln(214,79,268,79,bl)+tick(214,79,bl,8)+tick(268,79,bl,8)+lab(226,70,'x5')
+ln(68,97,68,349,bl)+[97,160,271,303,349].map(y=>ln(60,y,87,y,bl)).join('')+lab(55,142,'y4',1)+lab(55,232,'y3',1)+lab(55,296,'y2',1)+lab(55,340,'y1',1)
+tx(160,420,30,'不等边承台一',pur,CJK);
const t6=()=>pl('M545 91H587L767 207V280H455V218Z',yl,3)+ln(455,280,767,280,yl,4)+circ(573,135,23)+circ(510,243,23)+circ(711,243,23)+hatch(562,184,34,24,'#fff',3,3)
+ln(455,301,766,301,bl)+[455,511,574,713,766].map(x=>tick(x,295,bl,10)).join('')+lab(468,292,'x1')+lab(528,292,'x2')+lab(632,292,'x3')+lab(725,292,'x4')
+ln(492,73,610,73,bl)+[545,580,587].map(x=>tick(x,73,bl,7)).join('')+lab(492,66,'x5')+lab(588,66,'x6')
+ln(433,91,433,280,bl)+[91,136,220,250,280].map(y=>ln(426,y,450,y,bl)).join('')+lab(427,122,'y4',1)+lab(427,188,'y3',1)+lab(427,242,'y2',1)+lab(427,272,'y1',1)
+ln(777,208,784,208,bl)+lab(784,245,'y',1)
+tx(527,362,32,'不等边承台二',pur,CJK);
const arrowH=(a,b,y)=>pl(`M${a+14} ${y-5}L${a} ${y}L${a+14} ${y+5}Z`,'#1b2b33',1,'#1b2b33')+pl(`M${b-14} ${y-5}L${b} ${y}L${b-14} ${y+5}Z`,'#1b2b33',1,'#1b2b33')+ln(a,y,b,y,'#33444f',4);
const arrowV=(x,a,b)=>pl(`M${x-5} ${a+14}L${x} ${a}L${x+5} ${a+14}Z`,'#1b2b33',1,'#1b2b33')+pl(`M${x-5} ${b-14}L${x} ${b}L${x+5} ${b-14}Z`,'#1b2b33',1,'#1b2b33')+ln(x,a,x,b,'#33444f',4);
const TH={
a:[24,-57,()=>pl('M100 141L55 205L85 253H328L352 205L310 141',yl,3)+circ(132,204,28)+circ(276,204,28)+`<rect x="185" y="130" width="48" height="40" fill="#fff"/>`+hatch(185,130,48,40,'#6e92a8',3,3)
 +ln(30,283,378,283,bl)+[67,85,133,277,325,343].map(x=>tick(x,277,bl,15)).join('')+lab(30,276,'x1')+lab(93,276,'x2')+lab(190,276,'x3')+lab(285,276,'x2')+lab(347,276,'x1')
 +ln(380,141,380,253,bl)+ln(360,205,387,205,bl)+ln(360,253,387,253,bl)+lab(368,160,'y2',1)+lab(368,243,'y1',1)+tx(135,323,24,'三桩承台二',pur,CJK)],
b:[416,-57,()=>tx(438,182,48,'A','#fff',SERIF)+arrowV(490,130,270)+ln(470,270,512,270,'#22333d')+pl('M520 130V270H715V130',ol,3)+hatch(604,153,28,43,ol,3,3)
 +arrowH(522,712,298)+tick(520,301,'#33444f',21)+tick(713,301,'#33444f',21)+tx(607,345,48,'A','#fff',SERIF)],
c:[24,386,()=>tx(55,478,60,'阶式五桩台',pur,CJK+' letter-spacing="2"')+pl('M246 518L354 590L314 710H178L138 590Z',ol,3)+hatch(224,600,44,27,ol,3,3)
 +arrowV(116,520,712)+ln(96,520,140,520,'#22333d')+ln(96,712,140,712,'#22333d')+`<text x="83" y="610" font-size="40" fill="#fff" ${SERIF} ${rot(83,610,-90)}>A</text>`
 +arrowH(180,312,740)+tick(180,740,'#33444f',21)+tick(312,740,'#33444f',21)+tx(143,785,40,'B=A/1.5385','#fff',MONO)],
d:[416,386,()=>tx(448,478,60,'阶式六桩台',pur,CJK+' letter-spacing="2"')+pl('M596 517H706L762 613L706 709H596L541 613Z',ol,3)+hatch(630,597,44,30,ol,3,3)
 +arrowV(529,518,710)+ln(508,518,552,518,'#22333d')+ln(508,710,552,710,'#22333d')+`<text x="490" y="596" font-size="40" fill="#fff" ${SERIF} ${rot(490,596,-90)}>A</text>`
 +arrowH(596,706,737)+tick(596,737,'#33444f',21)+tick(706,737,'#33444f',21)+tx(542,785,40,'B=A/1.7326','#fff',MONO)],
e:[24,20,t5],f:[416,20,t6],g:[30,23,t5],h:[420,14,t6]};
$d('param-thumb',`:host{display:block;width:128px;height:144px;box-sizing:border-box;border:1px solid;border-color:#f8f8f8 #9a9a9a #9a9a9a #f8f8f8;padding:2px;background:#f0f0f0}svg{display:block;background:#6e92a8}`,h=>{const [x,y,f]=TH[h.getAttribute('k')];
return `<svg width="122" height="139" viewBox="${x} ${y} 366 417" shape-rendering="crispEdges" font-family="Noto Sans CJK SC,sans-serif">${f()}</svg>`});

const X=[];for(let x=270;x<800;x+=32.4)X.push(x);const X2=[];for(let x=238;x<815;x+=32.4)X2.push(x);
const cross=(x,y,c)=>pl(`M${x-4} ${y}H${x+4}M${x} ${y-4}V${y+4}`,c,3);
const gt=(x,y,t,ex='')=>`<text x="${x}" y="${y}" font-size="33" fill="#0f0" font-family="Liberation Sans,sans-serif" textLength="${t.length*17.4}" lengthAdjust="spacingAndGlyphs" ${ex}>${t}</text>`;
const gv=(x,y,t)=>{const L=t.length*17.4;return gt(x-L/2,y,t,`transform="rotate(-90 ${x} ${y})"`)};
const CADL=()=>`<g transform="translate(0 73) scale(.33333)">`+
`<rect x="142" y="160" width="810" height="468" fill="none" stroke="#fff" stroke-width="3"/>`+circ(318,384,80)+circ(780,384,80)+hatch(469,310,148,135,'#fff',3,7)
+ln(100,157,100,632)+ln(88,160,118,160)+ln(88,628,118,628)+ln(92,152,108,168)+ln(92,620,108,636)
+ln(142,670,952,670)+ln(142,655,142,685)+ln(952,655,952,685)+ln(134,680,150,660)+ln(944,680,960,660)
+`<rect x="525" y="658" width="70" height="24" fill="#000"/><rect x="90" y="350" width="24" height="90" fill="#000"/>`
+gt(525,682,'1500')+gv(113,395,'20000')
+tx(503,135,92,'2','#fff',SERIF)+tx(503,800,92,'2','#fff',SERIF)+ln(584,36,584,146)+ln(584,702,584,812)
+tx(17,467,92,'1','#fff',SERIF)+tx(978,467,92,'1','#fff',SERIF)+ln(0,478,84,478)+ln(957,478,1044,478)
+tx(288,895,87,'矩形承台','#fff',CJK+' font-weight="300"')+`</g>`;
const CADR=()=>`<g transform="translate(350 43) scale(.33333)">`+
ln(80,257,970,257)+pl('M80 238V282L100 292L62 296L80 306V350')+pl('M970 238V282L990 292L952 296L970 306V350')+ln(80,325,145,325)+ln(905,325,970,325)
+pl('M145 325L258 487')+pl('M147 487H795L925 283H968')
+pl('M493 257V52M587 257V52M465 52H525L535 35L530 68L540 52H605')
+pl('M472 632V442H566V632M445 632H510L518 615L515 648L525 632H585')
+ln(50,257,50,487)+ln(38,257,72,257)+ln(38,487,72,487)
+ln(238,272,238,352)+ln(225,272,258,272)+ln(225,352,258,352)
+pl('M320 215H400M322 215V290')+pl('M625 217H745M655 217L627 275M690 217L660 275M722 217L692 275M625 217L597 275')
+pl('M347 385H400M348 385V440')+pl('M575 405H690M600 405L560 430M630 405L590 430M660 405L620 430M690 405L650 430')
+pl('M890 352H960M890 352L845 410M860 368H890M845 388H875M825 412H860')
+pl('M205 487C205 465 215 452 226 445')+pl('M600 442V490M575 442H620')
+pl('M84 270H132L234 432H820L918 270H968','#f00',6)+pl('M805 350V270H258V350','#f00',6)
+pl('M84 542H132L234 704H815','#f00',4)+pl('M966 576H918L820 738H234','#f00',4)
+X.map(x=>cross(x,274,yl)).join('')+X2.map(x=>cross(x,424,yl)).join('')
+[[871,328],[861,346],[850,368],[836,388],[820,408]].map(p=>cross(p[0],p[1],'#f0f')).join('')
+tx(205,200,36,'横向面筋','#fff',CJK)+gt(348,200,'XMJ')+tx(600,205,36,'纵向面筋','#fff',CJK)+gt(750,206,'YMJ')
+tx(280,370,36,'横向底筋','#fff',CJK)+gt(422,370,'C8@200')+tx(537,395,36,'纵向底筋','#fff',CJK)+gt(680,393,'C18@150')
+gt(900,387,'C8@200')
+gv(62,375,'500')+gv(219,312,'0')+`<text x="195" y="462" font-size="30" fill="#0f0" font-family="Liberation Sans,sans-serif" ${rot(195,462,-75)}>60</text>`+gv(636,465,'100')
+`<text x="905" y="262" font-size="30" fill="#dfe8ee" ${CJK} ${rot(905,262,-62)}>节点设置</text>`
+`</g>`
+`<text x="465" y="338" font-size="29" fill="#fff" ${CJK} font-weight="300">交错翻起</text><text x="517" y="370" font-size="32" fill="#fff" text-anchor="middle" ${SERIF}>1-1</text>`+ln(489,377,546,377,'#fff',1);

$d('gg-dialog',`:host{position:absolute;left:329px;top:96px;width:981px;height:533px;box-sizing:border-box;border:1px solid #3f8fe0;background:#f0f0f0;display:flex;flex-direction:column;box-shadow:0 1px 28px rgba(0,0,0,.32);color:#111}
.hd{height:30px;flex:none;background:#fff;display:flex;align-items:center;padding:0 0 5px 7px;box-sizing:border-box;gap:5px;color:#222}
.hd .tt{flex:1}.wc{display:flex;gap:30px;margin-right:14px}
.body{flex:1;min-height:0;display:flex}
.left{flex:0 0 288px;display:flex;flex-direction:column;position:relative;min-height:0}
.lg{height:15px;flex:none;padding-left:7px;line-height:14px;background:linear-gradient(#f0f0f0 6px,#dcdcdc 6px,#dcdcdc 7px,#f0f0f0 7px)}
.tw{flex:1;min-height:0;display:flex;padding-left:5px}
.clip{flex:1;overflow:hidden;min-width:0}.grid{display:grid;grid-template-columns:128px 128px;gap:4px 3px;margin-top:-69px}
.right{flex:1;display:flex;flex-direction:column;min-width:0;border-right:2px solid #a8a8a8}
.rad{height:30px;flex:none;display:flex;align-items:center;padding-left:172px;background:#f0f0f0;border-bottom:1px solid #999;box-sizing:border-box}
.r{display:inline-flex;align-items:center;gap:1px;width:222px}.o{width:13px;height:13px;border:1px solid #333;border-radius:50%;box-sizing:border-box;background:#fff;display:inline-flex;align-items:center;justify-content:center}.o i{width:7px;height:7px;border-radius:50%;background:#222}
.cv{flex:1;background:#000;min-height:0;overflow:hidden;border-left:2px solid #a8a8a8}svg{display:block}
.ft{height:37px;flex:none;border-top:2px solid #a8a8a8;box-sizing:border-box;display:flex;align-items:center;background:#f0f0f0}
.b{height:24px;box-sizing:border-box;border:1px solid #adadad;background:#e1e1e1;display:flex;align-items:center;justify-content:center;flex:none}`,()=>
`<div class="hd">${ic('ggj',16)}<span style="width:0"></span><span class="tt">参数化选择</span><span class="wc">${ic('dmin')}${ic('dmax')}${ic('dx')}</span></div>
<div class="body"><div class="left"><div class="lg"><span>图形</span></div><div class="tw"><div class="clip"><div class="grid">${['a','b','c','d','e','f','g','h'].map(k=>`<param-thumb k="${k}"></param-thumb>`).join('')}</div></div><scroll-bar top="75" len="158" w="19"></scroll-bar><span style="width:1px"></span></div></div>
<div class="right"><div class="rad"><span class="r"><span class="o"><i></i></span><span>角度放坡形式</span></span><span class="r" style="gap:3px"><span class="o"></span><span>底宽放坡形式</span></span></div>
<div class="cv"><svg width="687" height="431" viewBox="0 0 687 431" shape-rendering="crispEdges">${CADL()}${CADR()}</svg></div></div></div>
<div class="ft"><span class="b" style="width:88px;margin-left:336px">配筋形式</span><span class="b" style="width:83px;margin-left:336px;padding-left:3px">确定</span><span class="b" style="width:89px;margin-left:21px">取消</span></div>`);

$d('gg-mark',`:host{position:absolute;left:1000px;top:549px;width:179px;height:92px;box-sizing:border-box;border:7px solid #f00;pointer-events:none}`,()=>'');
</script>
</body></html>
